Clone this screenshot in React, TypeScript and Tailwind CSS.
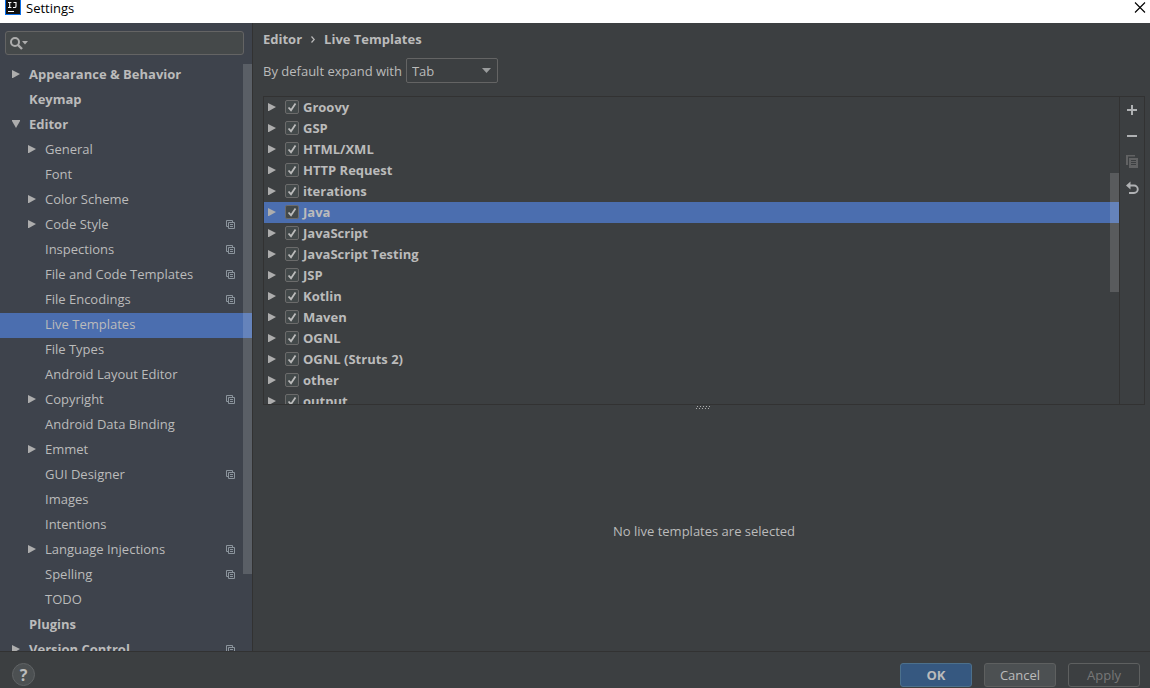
import React, { useState } from 'react';
import clsx from 'clsx';

interface TreeItem {
  label: string;
  level: 0 | 1;
  arrow?: 'right' | 'down';
  project?: boolean;
}

const treeItems: TreeItem[] = [
  { label: 'Appearance & Behavior', level: 0, arrow: 'right' },
  { label: 'Keymap', level: 0 },
  { label: 'Editor', level: 0, arrow: 'down' },
  { label: 'General', level: 1, arrow: 'right' },
  { label: 'Font', level: 1 },
  { label: 'Color Scheme', level: 1, arrow: 'right' },
  { label: 'Code Style', level: 1, arrow: 'right', project: true },
  { label: 'Inspections', level: 1, project: true },
  { label: 'File and Code Templates', level: 1, project: true },
  { label: 'File Encodings', level: 1, project: true },
  { label: 'Live Templates', level: 1 },
  { label: 'File Types', level: 1 },
  { label: 'Android Layout Editor', level: 1 },
  { label: 'Copyright', level: 1, arrow: 'right', project: true },
  { label: 'Android Data Binding', level: 1 },
  { label: 'Emmet', level: 1, arrow: 'right' },
  { label: 'GUI Designer', level: 1, project: true },
  { label: 'Images', level: 1 },
  { label: 'Intentions', level: 1 },
  { label: 'Language Injections', level: 1, arrow: 'right', project: true },
  { label: 'Spelling', level: 1, project: true },
  { label: 'TODO', level: 1 },
  { label: 'Plugins', level: 0 },
  { label: 'Version Control', level: 0, arrow: 'right', project: true },
];

const templateGroups = [
  'Groovy',
  'GSP',
  'HTML/XML',
  'HTTP Request',
  'iterations',
  'Java',
  'JavaScript',
  'JavaScript Testing',
  'JSP',
  'Kotlin',
  'Maven',
  'OGNL',
  'OGNL (Struts 2)',
  'other',
  'output',
];

function Arrow({ direction }: { direction?: 'right' | 'down' }) {
  return (
    <svg className="w-2 h-2 shrink-0" viewBox="0 0 8 8" fill="#adadad" aria-hidden="true">
      {direction === 'right' && <path d="M0 0L8 4L0 8.5z" />}
      {direction === 'down' && <path d="M-0.5 0H8.5L4 8z" />}
    </svg>
  );
}

function ProjectIcon() {
  return (
    <svg className="w-[9px] h-[9px] shrink-0" viewBox="0 0 9 9" fill="none" stroke="#8b949c" aria-hidden="true">
      <path d="M2 6.5H0.5V0.5H6.5V2" />
      <path d="M2.5 2.5H8.5V8.5H2.5z" />
      <path d="M4 4.5H7M4 6.5H7" />
    </svg>
  );
}

function TitleBar() {
  return (
    <header className="flex justify-between h-[23px] shrink-0 overflow-hidden bg-white text-black pl-[5px] pr-1">
      <div className="flex items-start gap-[5px]">
        <svg className="w-4 h-[15px]" viewBox="0 0 16 15" aria-hidden="true">
          <path fill="#0b6fe8" d="M0 0H16V15H0z" />
          <path fill="#111" d="M1 0H15V14H1z" />
          <path
            fill="none"
            stroke="#fff"
            strokeWidth="1.1"
            d="M3 2.5H6.4M4.7 2.5V7.5M3 7.5H6.4M8.5 2.5H11V6.2Q11 7.5 9.8 7.5H8M3 11.5H9"
          />
        </svg>
        <h1 className="leading-4">Settings</h1>
      </div>
      <button type="button" aria-label="Close" className="flex self-start pt-0.5">
        <svg className="w-3 h-[11px]" viewBox="0 0 12 11" fill="none" stroke="#000" strokeWidth="1.1">
          <path d="M1 0.5L11 10.5M11 0.5L1 10.5" />
        </svg>
      </button>
    </header>
  );
}

function Sidebar() {
  return (
    <aside className="relative flex flex-col w-[253px] shrink-0 overflow-hidden bg-[#3e434c] border-r border-[#323232]">
      <div className="pt-2 pb-2 pl-[5px] pr-2">
        <label className="flex items-center h-6 pl-1 gap-1 rounded-[3px] border border-[#646464] bg-[#45494a]">
          <svg className="w-[18px] h-[13px] shrink-0" viewBox="0 0 18 13" fill="none" aria-hidden="true">
            <circle cx="5" cy="5" r="4" stroke="#adadad" strokeWidth="2" />
            <path d="M8 8L12 12" stroke="#adadad" strokeWidth="2.4" />
            <path d="M12 4H18L15 7.5z" fill="#adadad" />
          </svg>
          <input type="text" aria-label="Search settings" className="w-full bg-transparent outline-none" />
        </label>
      </div>
      <ul className="flex-1 min-h-0 overflow-hidden">
        {treeItems.map((item) => (
          <li key={item.label}>
            <a
              href="#"
              className={clsx(
                'flex items-center h-[25px] pb-[3px] pr-[17px]',
                item.level === 0 ? 'pl-3 gap-[9px] font-bold' : 'pl-7 gap-[9px]',
                item.label === 'Live Templates' && 'bg-[#4b6eaf]'
              )}
            >
              <Arrow direction={item.arrow} />
              <span className="flex-1 whitespace-nowrap">{item.label}</span>
              {item.project && <ProjectIcon />}
            </a>
          </li>
        ))}
      </ul>
      <div className="absolute right-0 top-[41px] w-[9px] h-[510px] bg-white/15" />
    </aside>
  );
}

function TemplateRow({ name, selected }: { name: string; selected: boolean }) {
  const [checked, setChecked] = useState(true);

  return (
    <li className={clsx('flex items-center h-[21px] pb-px pl-1 gap-[9px]', selected && 'bg-[#4b6eaf]')}>
      <Arrow direction="right" />
      <label className="flex items-center gap-1 font-bold whitespace-nowrap">
        <span className="relative flex">
          <input
            type="checkbox"
            checked={checked}
            onChange={() => setChecked(!checked)}
            className="appearance-none w-3.5 h-3.5 rounded-[2px] border border-[#6b6b6b] bg-[#43494a]"
          />
          {checked && (
            <svg
              className="absolute inset-0 w-3.5 h-3.5 pointer-events-none"
              viewBox="0 0 14 14"
              fill="none"
              stroke="#bbbbbb"
              strokeWidth="1.8"
            >
              <path d="M3.5 7.5L6 10.2L10.5 3.5" />
            </svg>
          )}
        </span>
        {name}
      </label>
    </li>
  );
}

function ListToolbar() {
  return (
    <div className="flex flex-col items-center w-[25px] shrink-0 gap-2.5 pt-[5px] border-l border-[#323232]">
      <button type="button" aria-label="Add" className="w-4 h-4">
        <svg viewBox="0 0 16 16" fill="#afb1b3">
          <path d="M7 3H9V7H13V9H9V13H7V9H3V7H7z" />
        </svg>
      </button>
      <button type="button" aria-label="Remove" className="w-4 h-4">
        <svg viewBox="0 0 16 16" fill="#afb1b3">
          <path d="M3 7H13V9H3z" />
        </svg>
      </button>
      <button type="button" aria-label="Duplicate" disabled className="w-4 h-4">
        <svg viewBox="0 0 16 16">
          <path fill="#616263" d="M2 1H11V2.5H4V11H2z" />
          <path fill="#616263" d="M5 4H14V14H5z" />
          <path stroke="#3c3f41" d="M7 6.5H12M7 8.5H12M7 10.5H12" />
        </svg>
      </button>
      <button type="button" aria-label="Restore defaults" className="w-4 h-4">
        <svg viewBox="0 0 16 16" fill="none">
          <path stroke="#afb1b3" strokeWidth="1.9" d="M5 5.5H10A3.7 3.7 0 0 1 10 13H5" />
          <path fill="#afb1b3" d="M2 5.5L6.5 1.5V9.5z" />
        </svg>
      </button>
    </div>
  );
}

function LiveTemplates() {
  return (
    <main className="flex flex-col flex-1 min-w-0 pl-2.5 pr-[5px]">
      <nav aria-label="Breadcrumb" className="flex items-center h-8 font-bold">
        <a href="#">Editor</a>
        <svg className="w-1 h-[7px] mx-[9px]" viewBox="0 0 4 7" fill="none" stroke="#bbbbbb" strokeWidth="1.2">
          <path d="M0.5 0.5L3.2 3.5L0.5 6.5" />
        </svg>
        <span>Live Templates</span>
      </nav>
      <div className="flex items-center pt-[3px] pb-[13px] gap-1">
        <label htmlFor="expand-with">By default expand with</label>
        <div className="relative">
          <select
            id="expand-with"
            className="block appearance-none w-[92px] h-[25px] pl-[5px] rounded-[2px] border border-[#646464] bg-[#3c3f41] outline-none"
          >
            <option>Tab</option>
            <option>Enter</option>
            <option>Space</option>
          </select>
          <svg
            className="absolute right-[7px] top-[10px] w-[9px] h-[5px] pointer-events-none"
            viewBox="0 0 9 5"
            fill="#9a9c9d"
          >
            <path d="M0 0H9L4.5 5z" />
          </svg>
        </div>
      </div>
      <div className="grid flex-1 min-h-0 grid-rows-[9fr_5px_7fr]">
        <section className="flex min-h-0 border border-[#323232]">
          <div className="relative flex-1 overflow-hidden">
            <ul>
              {templateGroups.map((name) => (
                <TemplateRow key={name} name={name} selected={name === 'Java'} />
              ))}
            </ul>
            <div className="absolute right-0 top-[76px] w-[9px] h-[119px] bg-white/15" />
          </div>
          <ListToolbar />
        </section>
        <svg className="w-4 h-[3px] mt-px justify-self-center" viewBox="0 0 16 3" fill="#adadad" aria-hidden="true">
          <path d="M1 0h1v1h-1zM4 0h1v1h-1zM7 0h1v1h-1zM10 0h1v1h-1zM13 0h1v1h-1z" />
          <path d="M0 2h1v1h-1zM3 2h1v1h-1zM6 2h1v1h-1zM9 2h1v1h-1zM12 2h1v1h-1z" />
        </svg>
        <div className="flex items-center justify-center">
          <p>No live templates are selected</p>
        </div>
      </div>
    </main>
  );
}

function Footer() {
  return (
    <footer className="flex items-start justify-between shrink-0 h-[37px] pt-[11px] pl-3 pr-2.5 border-t border-[#323232]">
      <button
        type="button"
        aria-label="Help"
        className="flex items-center justify-center w-[23px] h-[23px] rounded-full border border-[#606365] bg-[#4c5052] text-base font-bold"
      >
        ?
      </button>
      <div className="flex gap-3">
        <button type="button" className="w-[72px] h-6 rounded-[3px] border border-[#4c708c] bg-[#365880] font-bold">
          OK
        </button>
        <button type="button" className="w-[72px] h-6 rounded-[3px] border border-[#5e6060] bg-[#4c5052]">
          Cancel
        </button>
        <button type="button" disabled className="w-[72px] h-6 rounded-[3px] border border-[#5e6060] text-[#777777]">
          Apply
        </button>
      </div>
    </footer>
  );
}

export default function App() {
  return (
    <div className="flex flex-col h-screen overflow-hidden bg-[#3c3f41] font-['Open_Sans','Noto_Sans',sans-serif] text-[13px] leading-5 text-[#bbbbbb]">
      <TitleBar />
      <div className="flex flex-1 min-h-0">
        <Sidebar />
        <LiveTemplates />
      </div>
      <Footer />
    </div>
  );
}
